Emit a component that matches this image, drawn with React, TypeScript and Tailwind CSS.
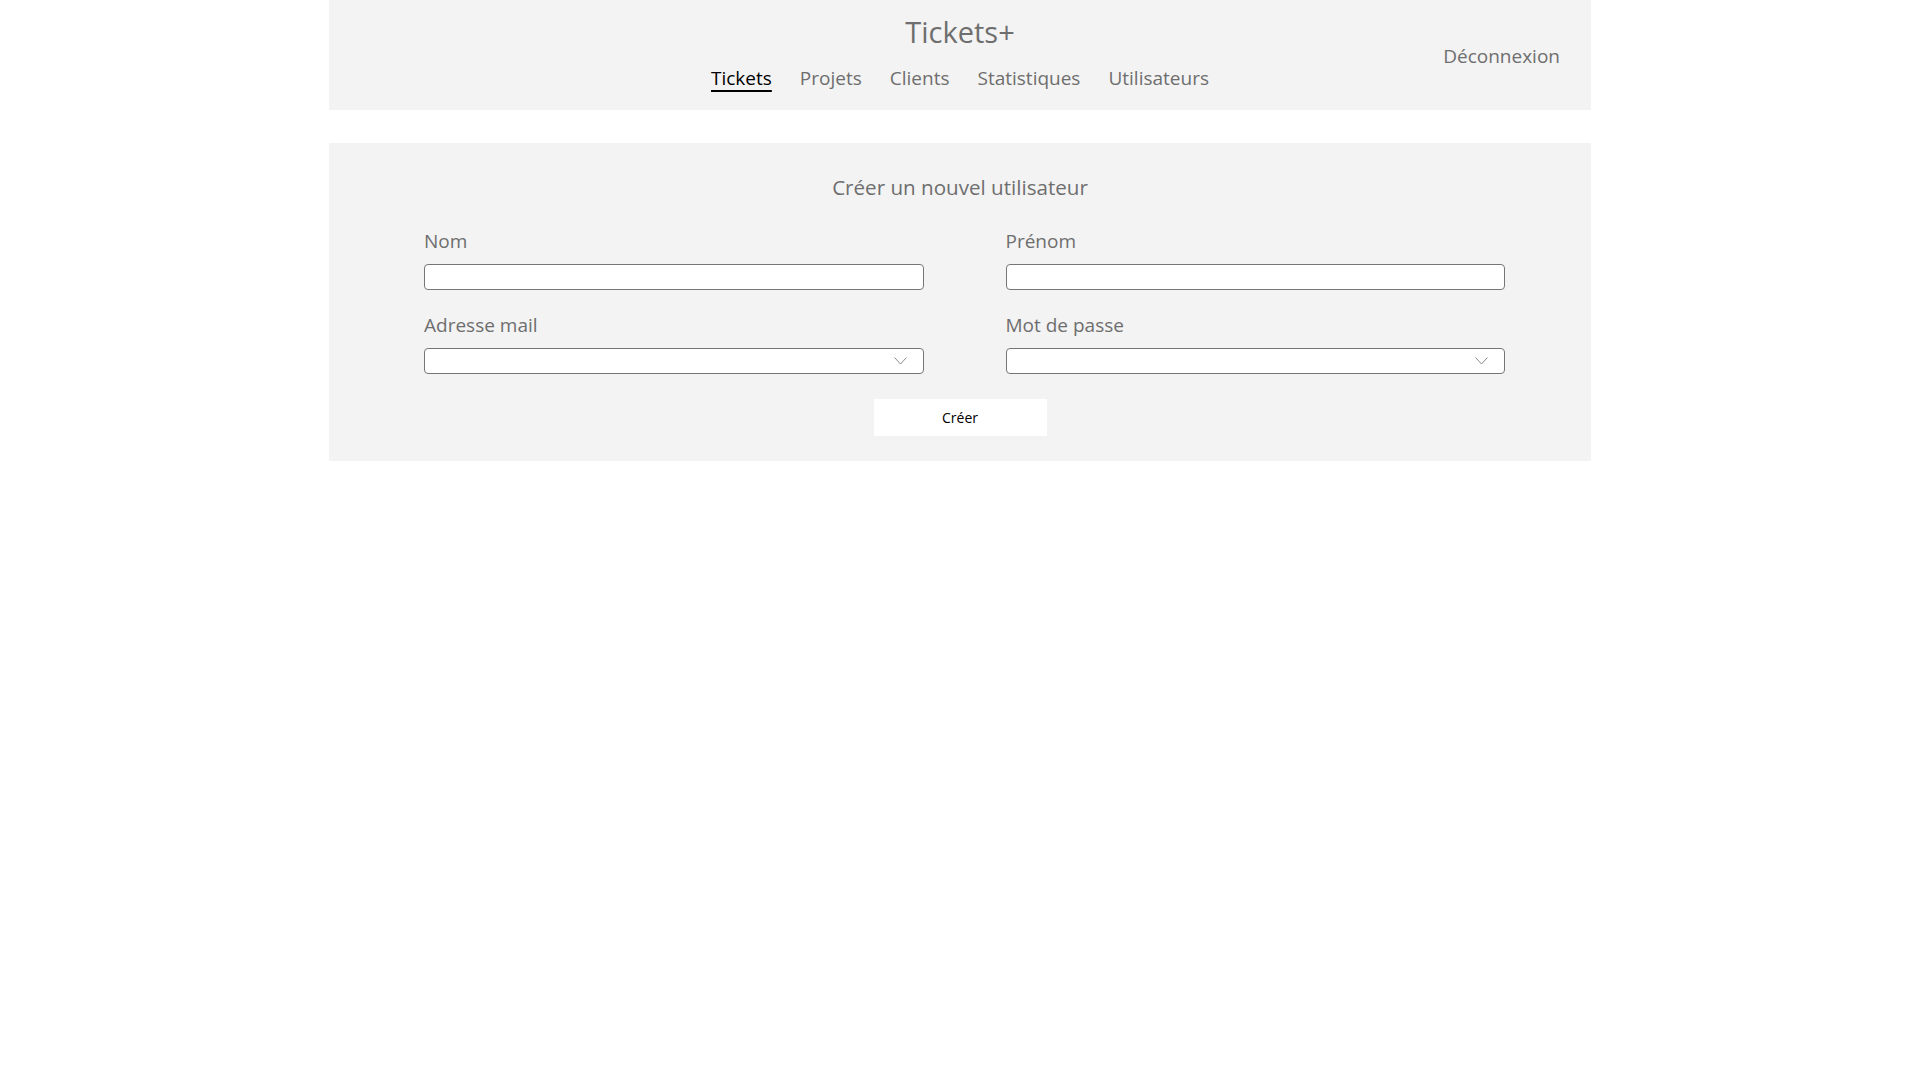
import React from "react";

const font = { fontFamily: '"Open Sans", "Noto Sans", sans-serif' };

function Chevron() {
  return (
    <svg width="13" height="8" viewBox="0 0 13 8" className="absolute right-[16px] top-1/2 -translate-y-1/2">
      <path d="M0.5 0.5 L6.5 7 L12.5 0.5" fill="none" stroke="#8a8a8a" strokeWidth="1" />
    </svg>
  );
}

function Field({ label, select }: { label: string; select?: boolean }) {
  return (
    <div className="flex flex-col">
      <label className="text-[19px] leading-[26px] text-[#6e6e6e]">{label}</label>
      <div className="relative mt-[10px] h-[26px] rounded-[4px] border border-[#767676] bg-white">
        {select && <Chevron />}
      </div>
    </div>
  );
}

export default function App() {
  const nav = ["Tickets", "Projets", "Clients", "Statistiques", "Utilisateurs"];
  return (
    <div className="min-h-screen bg-white" style={font}>
      <div className="mx-auto w-[1262px]">
        <header className="grid h-[110px] grid-cols-[1fr_auto_1fr] bg-[#f3f3f3]">
          <div />
          <div className="flex flex-col items-center pt-[12px]">
            <div className="text-[29px] leading-[40px] text-[#6e6e6e]">Tickets+</div>
            <nav className="mt-[13px] flex gap-[28px] text-[19px] leading-[26px]">
              {nav.map((n, i) => (
                <span
                  key={n}
                  className={
                    i === 0
                      ? "text-black underline decoration-black decoration-[2px] underline-offset-[5px]"
                      : "text-[#6e6e6e]"
                  }
                >
                  {n}
                </span>
              ))}
            </nav>
          </div>
          <div className="flex items-center justify-end pr-[31px] pt-[2px]">
            <span className="text-[19px] leading-[26px] text-[#6e6e6e]">Déconnexion</span>
          </div>
        </header>

        <section className="mt-[33px] flex flex-col bg-[#f3f3f3] pb-[25px] pt-[30px]">
          <h1 className="text-center text-[20.6px] leading-[29px] text-[#6e6e6e]">Créer un nouvel utilisateur</h1>
          <div className="mt-[26px] grid grid-cols-2 gap-x-[82px] gap-y-[22px] pl-[95px] pr-[86px]">
            <Field label="Nom" />
            <Field label="Prénom" />
            <Field label="Adresse mail" select />
            <Field label="Mot de passe" select />
          </div>
          <div className="mt-[25px] flex justify-center">
            <button className="h-[37px] w-[173px] bg-white text-[14px] text-black">Créer</button>
          </div>
        </section>
      </div>
    </div>
  );
}
